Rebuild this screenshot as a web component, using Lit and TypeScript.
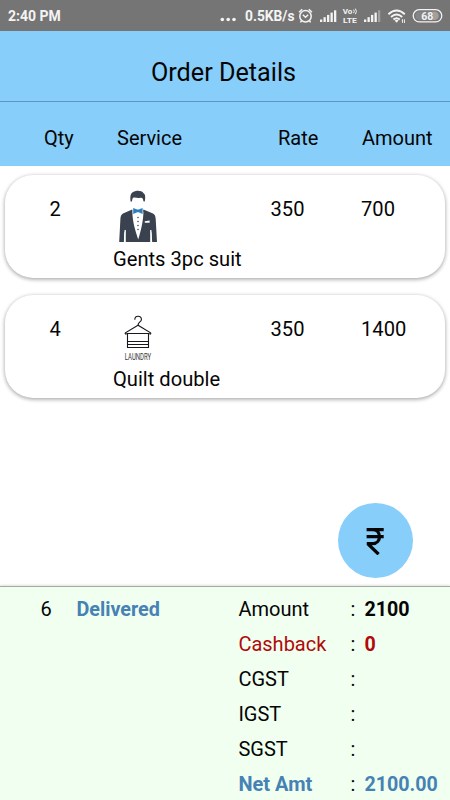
import { LitElement, html, css, svg } from "lit";
import { customElement } from "lit/decorators.js";
import { classMap } from "lit/directives/class-map.js";

const suitIcon = html`<svg class="icon" width="50" height="54" viewBox="0 0 50 54">
  <path fill="#39424e" d="M17.6 12.5C16.6 6 18.4 3.4 21.2 2.6C23.5 1.2 28.6 1.2 30.6 4.2C32.3 5 32.6 8 31.8 12.5L30.4 12.2C30.2 9.6 29.4 8.4 27.4 8.8C24.6 9.6 22.6 8.2 20.6 8.6C19.4 9.2 19.2 10.6 19 12.5Z"/>
  <path fill="#39424e" d="M19.2 20.4L25 46L30.4 20.4L40 24.6C42 25.6 42.4 27.4 42.7 30L44 53H38.6V44.4L37.6 40.8L37.2 53H12.8L12.4 40.8L11.2 44.4V53H6.2L7.4 30C7.6 27.4 8.2 25.6 10 24.6Z"/>
  <path fill="none" stroke="#fff" stroke-width="1.3" d="M12.2 41L11.5 53M37.8 41L38.5 53"/>
  <path fill="#fff" d="M19.4 22.8L21 20.8H28.8L30.4 22.8C30.4 32 27.8 42 25.2 50.4C22.4 42 19.4 33 19.4 22.8Z"/>
  <path fill="#2f7fc0" d="M20.2 19L24.2 20.6H25.6L29.6 19V25L25.6 23.2H24.2L20.2 25Z"/>
  <g fill="#39424e"><circle cx="25" cy="28.4" r=".75"/><circle cx="25" cy="32.4" r=".75"/><circle cx="25" cy="36.4" r=".75"/><circle cx="25" cy="40.4" r=".75"/></g>
  <path fill="#fff" d="M31.8 32.2L36.6 31.6V33.8H31.8Z"/>
</svg>`;

const laundryIcon = html`<svg class="icon" width="50" height="54" viewBox="0 -1 50 54">
  <g fill="none" stroke="#15181c" stroke-width="1.1">
    <path d="M21.8 9.8C21.8 5.2 28.2 5.2 28.4 9.4C28.4 12.2 25 11.6 25 15.4"/>
    <path d="M25 15.2L12.4 22.8C11.8 24.2 13 24.6 14 23.5H36C37 24.6 38.2 24.2 37.6 22.8Z"/>
    <path d="M14.5 23.5V37.5H35.5V23.5"/>
    <path d="M14.5 31.5H35.5M14.5 34.5H35.5"/>
  </g>
  <text x="11.8" y="49.6" textLength="26.4" lengthAdjust="spacingAndGlyphs" class="laundry">LAUNDRY</text>
</svg>`;

const items = [
  { qty: 2, icon: suitIcon, name: "Gents 3pc suit", rate: 350, amount: 700 },
  { qty: 4, icon: laundryIcon, name: "Quilt double", rate: 350, amount: 1400 },
];

const totals = [
  { label: "Amount", value: "2100", tone: "" },
  { label: "Cashback", value: "0", tone: "red" },
  { label: "CGST", value: "", tone: "" },
  { label: "IGST", value: "", tone: "" },
  { label: "SGST", value: "", tone: "" },
  { label: "Net Amt", value: "2100.00", tone: "net" },
];

@customElement("status-bar")
class StatusBar extends LitElement {
  static styles = css`
    :host {
      display: flex;
      align-items: center;
      box-sizing: border-box;
      height: 31px;
      padding: 1px 6px 0 8px;
      background: #757575;
      color: #f4f4f4;
      font: 700 14px/30px Roboto, sans-serif;
    }
    .time { flex: 1; }
    svg { display: block; flex: none; }
    .pct { font: 700 10.5px Roboto, sans-serif; }
    .volte { font: 700 7.6px Roboto, sans-serif; }
  `;

  bars(lastDim: boolean) {
    return [0, 1, 2, 3, 4].map(
      (i) => svg`<rect x=${0.5 + i * 3.5} y=${9.5 - i * 2.3} width="2.3" height=${2.5 + i * 2.3}
        fill="#f4f4f4" opacity=${lastDim && i === 4 ? 0.35 : 1}></rect>`
    );
  }

  render() {
    return html`
      <span class="time">2:40 PM</span>
      <svg width="225" height="30" viewBox="219 1 225 30" fill="none" stroke="#f4f4f4">
        <g fill="#f4f4f4" stroke="none">
          <circle cx="222.3" cy="19.5" r="1.8"/><circle cx="228.2" cy="19.5" r="1.8"/><circle cx="234" cy="19.5" r="1.8"/>
          <text x="245" y="21" font-size="14" textLength="49.5" lengthAdjust="spacingAndGlyphs">0.5KB/s</text>
        </g>
        <g stroke-width="1.5">
          <circle cx="305.5" cy="16.2" r="5.7"/>
          <path d="M302.8 14.8L305.5 17.2L308.2 14.8M299 12.2L302.2 9.3M312 12.2L308.8 9.3M301.6 20.7L300.4 22.4M309.4 20.7L310.6 22.4"/>
        </g>
        <g transform="translate(319.5 10)" stroke="none">${this.bars(false)}</g>
        <g fill="#f4f4f4" stroke="none" class="volte">
          <text x="342.8" y="14.2" textLength="9.6" lengthAdjust="spacingAndGlyphs">Vo</text>
          <text x="343" y="22.6" textLength="13.8" lengthAdjust="spacingAndGlyphs">LTE</text>
        </g>
        <path stroke-width="1" d="M353.6 9.6Q355 11.4 353.6 13.2M355.4 8.6Q357.4 11.4 355.4 14.2"/>
        <g transform="translate(363.5 10)" stroke="none">${this.bars(true)}</g>
        <g stroke-width="1.9">
          <path d="M388.4 14.2Q396.6 6.8 404.8 14.2M391 17Q396.6 12 402.2 17M393.4 19.6Q396.6 17 399.8 19.6"/>
          <path fill="#f4f4f4" stroke="none" d="M394.6 20.6Q396.6 19 398.6 20.6L396.6 22.8Z"/>
          <path stroke-width="1" d="M402.4 22.8V19.2M404.4 19.4V23"/>
        </g>
        <rect x="413.2" y="9.7" width="28.6" height="12.2" rx="6.1" stroke-width="1.3"/>
        <path d="M432 11.5H434.5A4.3 4.3 0 0 1 434.5 20.1H432Z" fill="#a0a0a0" stroke="none" />
        <path d="M419.5 11.5H433V20.1H419.5A4.3 4.3 0 0 1 419.5 11.5Z" fill="#858585" stroke="none"/>
        <text class="pct" x="421.2" y="19.7" fill="#f4f4f4" stroke="none">68</text>
      </svg>
    `;
  }
}

@customElement("order-item")
class OrderItem extends LitElement {
  static properties = { item: {} };
  declare item: (typeof items)[number];

  static styles = css`
    :host {
      display: grid;
      grid-template-columns: 108px 157.5px 90.5px 1fr;
      box-sizing: border-box;
      height: 103px;
      padding-top: 14px;
      border-radius: 28px;
      background: #fff;
      box-shadow: 0 1px 4px rgba(0, 0, 0, 0.32), 0 2px 4px rgba(0, 0, 0, 0.08);
      font: 20.15px/24px Roboto, sans-serif;
    }
    .num { padding-top: 8px; }
    .qty { padding-left: 44.5px; }
    .icon { display: block; margin-bottom: 4px; }
    .name { white-space: nowrap; }
    .laundry {
      font: 9px Roboto, sans-serif;
      fill: #333;
    }
  `;

  render() {
    const { qty, icon, name, rate, amount } = this.item;
    return html`
      <div class="num qty">${qty}</div>
      <div>${icon}<div class="name">${name}</div></div>
      <div class="num">${rate}</div>
      <div class="num">${amount}</div>
    `;
  }
}

@customElement("app-root")
class AppRoot extends LitElement {
  static styles = css`
    :host {
      display: flex;
      flex-direction: column;
      box-sizing: border-box;
      width: 450px;
      height: 800px;
      overflow: hidden;
      background: #fff;
      color: #050505;
      font: 20px/24px Roboto, sans-serif;
    }
    .title {
      box-sizing: border-box;
      height: 71px;
      padding: 12px 3px 0 0;
      background: #87cefa;
      border-bottom: 1px solid #5c98c6;
      text-align: center;
      font-size: 25.2px;
      line-height: 59px;
    }
    .columns {
      display: grid;
      grid-template-columns: 73px 161px 84px 1fr;
      height: 64px;
      padding-left: 44px;
      line-height: 72px;
      background: #87cefa;
    }
    .list {
      flex: 1;
      display: flex;
      flex-direction: column;
      gap: 17px;
      padding: 9px 5px 0;
    }
    .fab {
      align-self: flex-end;
      display: grid;
      place-items: center;
      width: 75px;
      height: 75px;
      margin: 0 37.5px 8px 0;
      border-radius: 50%;
      background: #87cefa;
    }
    .summary {
      display: grid;
      grid-template-columns: 36px 162px 1fr;
      box-sizing: border-box;
      height: 214px;
      padding: 5px 0 0 40.4px;
      border-top: 1px solid #a3aba3;
      box-shadow: 0 -1px 2px rgba(0, 0, 0, 0.12);
      background: #f0fff0;
      line-height: 35px;
    }
    .delivered { color: #4682b4; font-weight: 700; font-size: 19.8px; }
    .row { display: grid; grid-template-columns: 112px 14px 1fr; }
    .value { font-weight: 700; font-size: 19.7px; }
    .red .label, .red .value { color: #b00a0a; }
    .net .label, .net .value { color: #4682b4; font-weight: 700; }
  `;

  render() {
    return html`
      <status-bar></status-bar>
      <header class="title">Order Details</header>
      <div class="columns"><span>Qty</span><span>Service</span><span>Rate</span><span>Amount</span></div>
      <main class="list">${items.map((item) => html`<order-item .item=${item}></order-item>`)}</main>
      <div class="fab">
        <svg width="20" height="28" viewBox="0 0 20 28" fill="none" stroke="#050505" stroke-width="3.3">
          <path d="M1.6 2.7H18.7M1.6 9.7H18.7M1.6 2.7H7.5C16.8 2.7 16.8 16.6 7.5 16.6H3.4V17.4L13.6 27.2"/>
        </svg>
      </div>
      <footer class="summary">
        <span>6</span>
        <span class="delivered">Delivered</span>
        <div>
          ${totals.map(
            (t) => html`<div class=${classMap({ row: true, red: t.tone === "red", net: t.tone === "net" })}>
              <span class="label">${t.label}</span><span>:</span><span class="value">${t.value}</span>
            </div>`
          )}
        </div>
      </footer>
    `;
  }
}
